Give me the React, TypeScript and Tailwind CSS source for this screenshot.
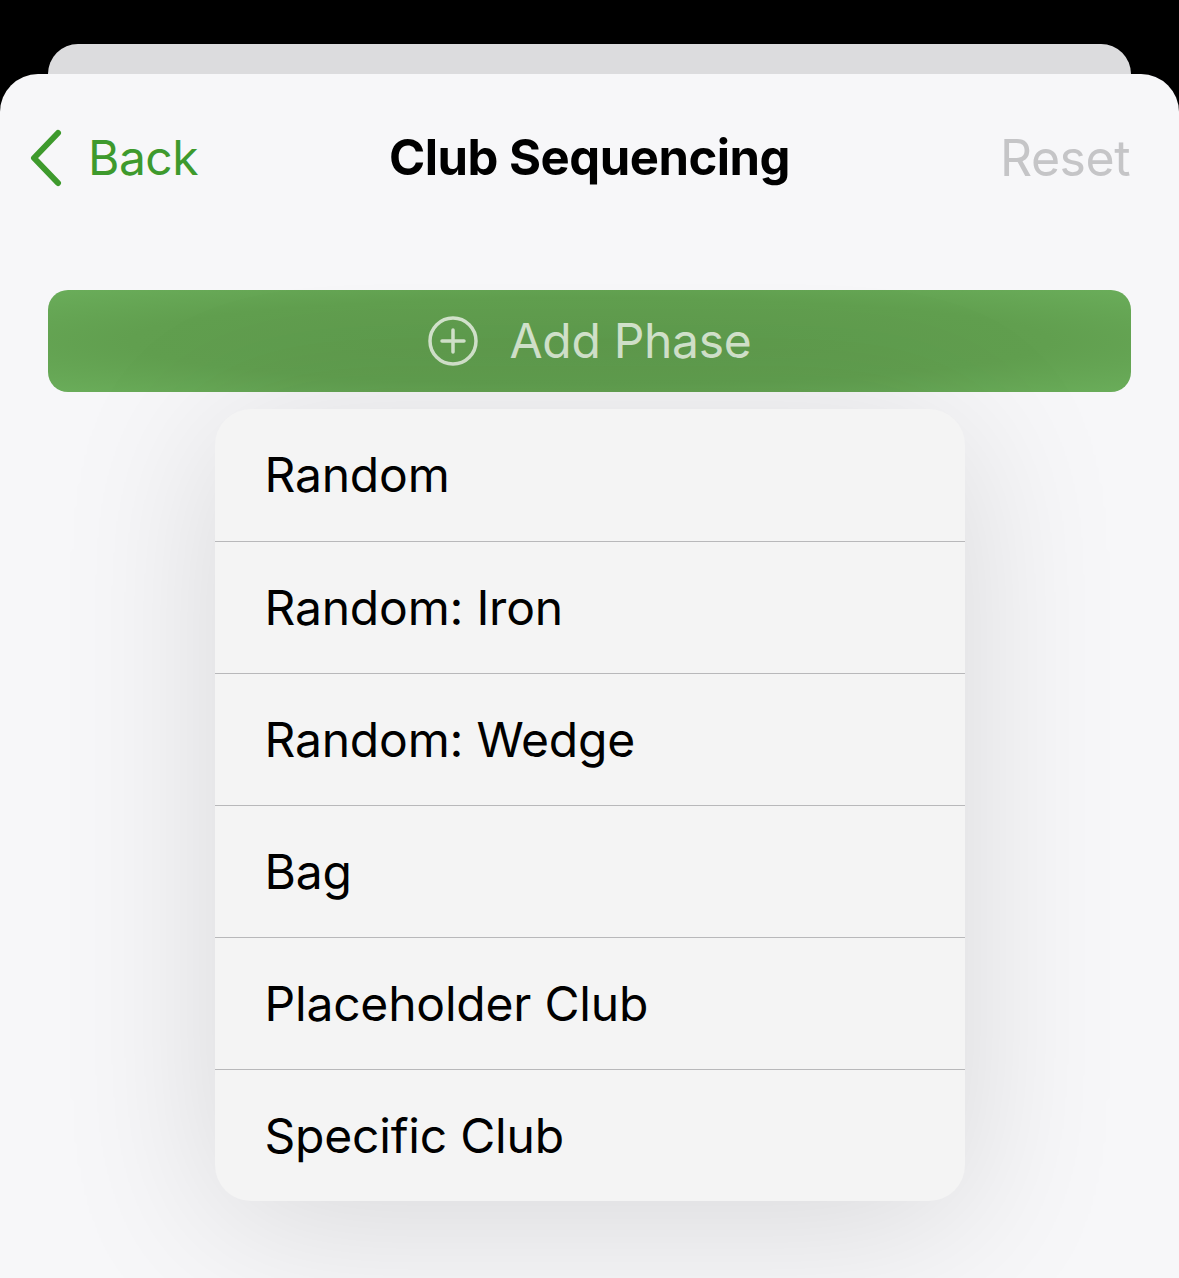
import React from "react";

const items = [
  "Random",
  "Random: Iron",
  "Random: Wedge",
  "Bag",
  "Placeholder Club",
  "Specific Club",
];

export default function App() {
  return (
    <div
      className="w-[1179px] h-[1278px] bg-black flex flex-col overflow-hidden"
      style={{ fontFamily: 'Inter, "Liberation Sans", sans-serif' }}
    >
      <div className="h-[44px] shrink-0" />
      <div className="mx-[48px] h-[30px] shrink-0 rounded-t-[30px] bg-[#dcdcde]" />
      <div className="flex-1 rounded-t-[38px] bg-[#f7f7f9] flex flex-col">
        {/* nav */}
        <div className="h-[168px] flex items-center justify-between pl-[28px] pr-[49px] relative">
          <div className="flex items-center gap-[26px] text-[#3e9a2d]">
            <svg width="34" height="58" viewBox="0 0 34 58" fill="none">
              <path d="M30 4 L6 29 L30 54" stroke="#3e9a2d" strokeWidth="6" strokeLinecap="round" strokeLinejoin="round" />
            </svg>
            <span className="text-[48px] tracking-[-0.5px]">Back</span>
          </div>
          <span className="absolute left-0 right-0 text-center text-[49px] font-bold text-black tracking-[-0.5px] pointer-events-none">
            Club Sequencing
          </span>
          <span className="text-[50px] text-[#c5c5c7] tracking-[-0.5px]">Reset</span>
        </div>
        <div className="h-[48px]" />
        {/* add phase */}
        <div className="mx-[48px] h-[102px] rounded-[20px] flex items-center justify-center gap-[30px] bg-[radial-gradient(ellipse_at_center,#5e9a4c_0%,#619f4f_60%,#6aad5a_100%)]">
          <svg width="52" height="52" viewBox="0 0 52 52" fill="none">
            <circle cx="26" cy="26" r="23" stroke="#d3e3cc" strokeWidth="3.5" />
            <path d="M26 15 V37 M15 26 H37" stroke="#d3e3cc" strokeWidth="3.5" strokeLinecap="round" />
          </svg>
          <span className="text-[48px] text-[#d3e3cc] tracking-[-0.3px]">Add Phase</span>
        </div>
        {/* menu */}
        <div className="flex justify-center pt-[17px]">
          <div className="w-[750px] rounded-[36px] bg-[#f4f4f4] shadow-[0_20px_160px_rgba(0,0,0,0.13)] overflow-hidden">
            {items.map((t, i) => (
              <div
                key={t}
                className={
                  "h-[132px] flex items-center pl-[50px] text-[48px] text-black tracking-[-0.2px] " +
                  (i > 0 ? "border-t border-[#b8b8ba]" : "")
                }
              >
                {t}
              </div>
            ))}
          </div>
        </div>
      </div>
    </div>
  );
}
